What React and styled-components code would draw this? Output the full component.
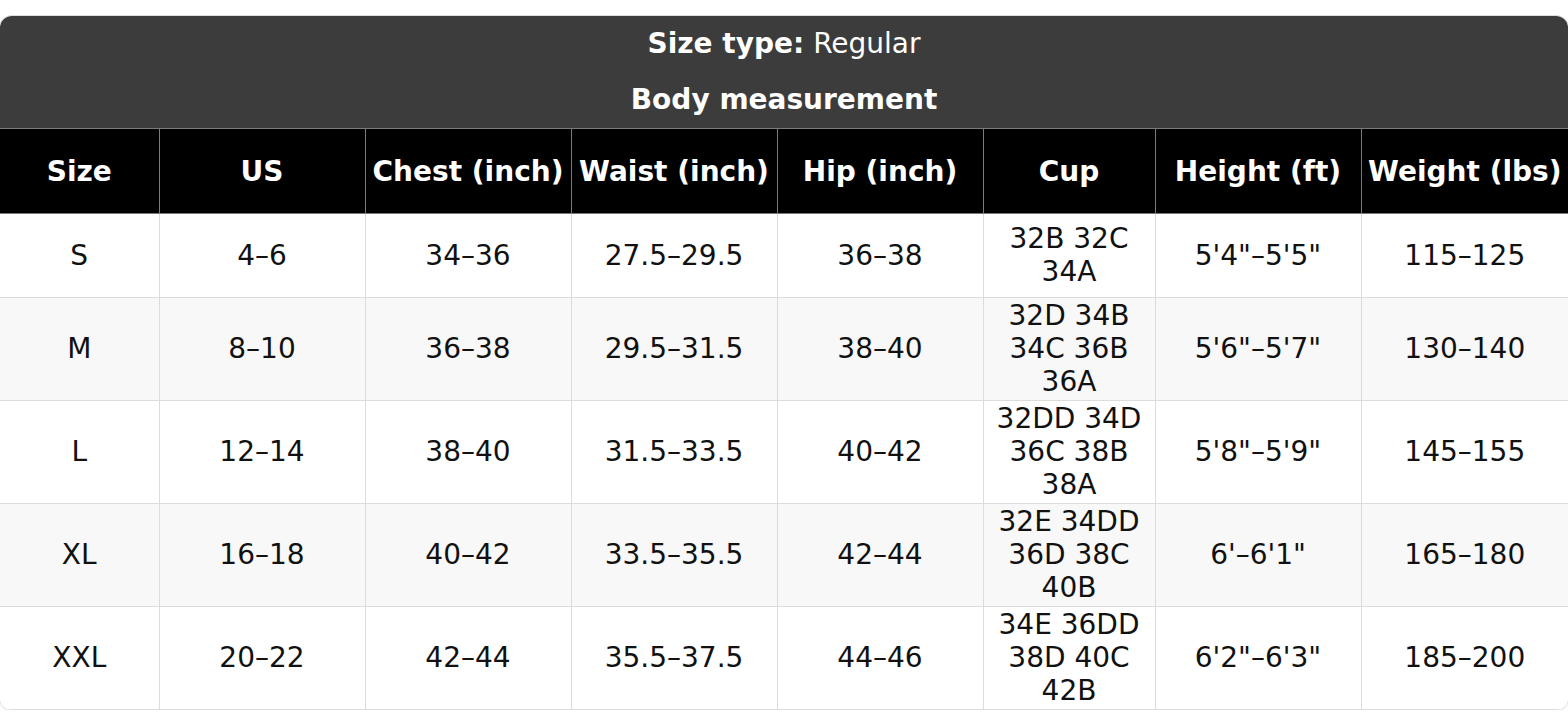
import React from 'react';
import styled, { createGlobalStyle } from 'styled-components';

const GlobalStyle = createGlobalStyle`
  body {
    margin: 0;
    background: #fff;
    font-family: "DejaVu Sans", "Liberation Sans", sans-serif;
  }
`

const Wrapper = styled.div`
  margin-top: 16px;
  border-radius: 12px;
  overflow: hidden;
  box-shadow: 0 0 0 1px #dedede;
`

const Table = styled.table`
  width: 100%;
  border-collapse: collapse;
  table-layout: fixed;
  font-size: 28px;
  line-height: normal;
  text-align: center;
`

const TitleCell = styled.th`
  background: #3c3c3c;
  color: #fff;
  font-weight: ${p => (p.$bold ? 700 : 400)};
  padding: ${p => p.$pad};
  border-bottom: ${p => (p.$last ? '1px solid #7a7a7a' : 'none')};
`

const HeadCell = styled.th`
  background: #000;
  color: #fff;
  font-weight: 700;
  height: 85px;
  box-sizing: border-box;
  padding: 3px 4px;
  border: 1px solid #7a7a7a;
  border-top: none;
  white-space: nowrap;
  &:first-child { border-left: none; }
  &:last-child { border-right: none; }
`

const Row = styled.tr`
  background: ${p => (p.$alt ? '#f8f8f8' : '#fff')};
`

const Cell = styled.td`
  color: #111;
  height: ${p => (p.$h ? `${p.$h}px` : 'auto')};
  box-sizing: border-box;
  padding: 1px 6px 2px;
  border: 1px solid #dcdcdc;
  &:first-child { border-left: none; }
  &:last-child { border-right: none; }
`

const widths = [159, 206, 206, 206, 206, 172, 206, 207];

const headers = ['Size', 'US', 'Chest (inch)', 'Waist (inch)', 'Hip (inch)', 'Cup', 'Height (ft)', 'Weight (lbs)'];

const rows = [
  ['S', '4–6', '34–36', '27.5–29.5', '36–38', '32B 32C 34A', '5\'4"–5\'5"', '115–125'],
  ['M', '8–10', '36–38', '29.5–31.5', '38–40', '32D 34B 34C 36B 36A', '5\'6"–5\'7"', '130–140'],
  ['L', '12–14', '38–40', '31.5–33.5', '40–42', '32DD 34D 36C 38B 38A', '5\'8"–5\'9"', '145–155'],
  ['XL', '16–18', '40–42', '33.5–35.5', '42–44', '32E 34DD 36D 38C 40B', '6\'–6\'1"', '165–180'],
  ['XXL', '20–22', '42–44', '35.5–37.5', '44–46', '34E 36DD 38D 40C 42B', '6\'2"–6\'3"', '185–200'],
];

export default function App() {
  return (
    <>
      <GlobalStyle />
      <Wrapper>
        <Table>
          <colgroup>
            {widths.map((w, i) => <col key={i} style={{ width: w }} />)}
          </colgroup>
          <thead>
            <tr>
              <TitleCell colSpan={8} $pad="11px 0 12px">
                <b>Size type:</b> <span style={{ fontWeight: 400 }}>Regular</span>
              </TitleCell>
            </tr>
            <tr>
              <TitleCell colSpan={8} $bold $last $pad="11px 0 12px">Body measurement</TitleCell>
            </tr>
            <tr>
              {headers.map(h => <HeadCell key={h}>{h}</HeadCell>)}
            </tr>
          </thead>
          <tbody>
            {rows.map((r, i) => (
              <Row key={r[0]} $alt={i % 2 === 1}>
                {r.map((c, j) => <Cell key={j} $h={i === 0 ? 84 : 0}>{c}</Cell>)}
              </Row>
            ))}
          </tbody>
        </Table>
      </Wrapper>
    </>
  );
}
